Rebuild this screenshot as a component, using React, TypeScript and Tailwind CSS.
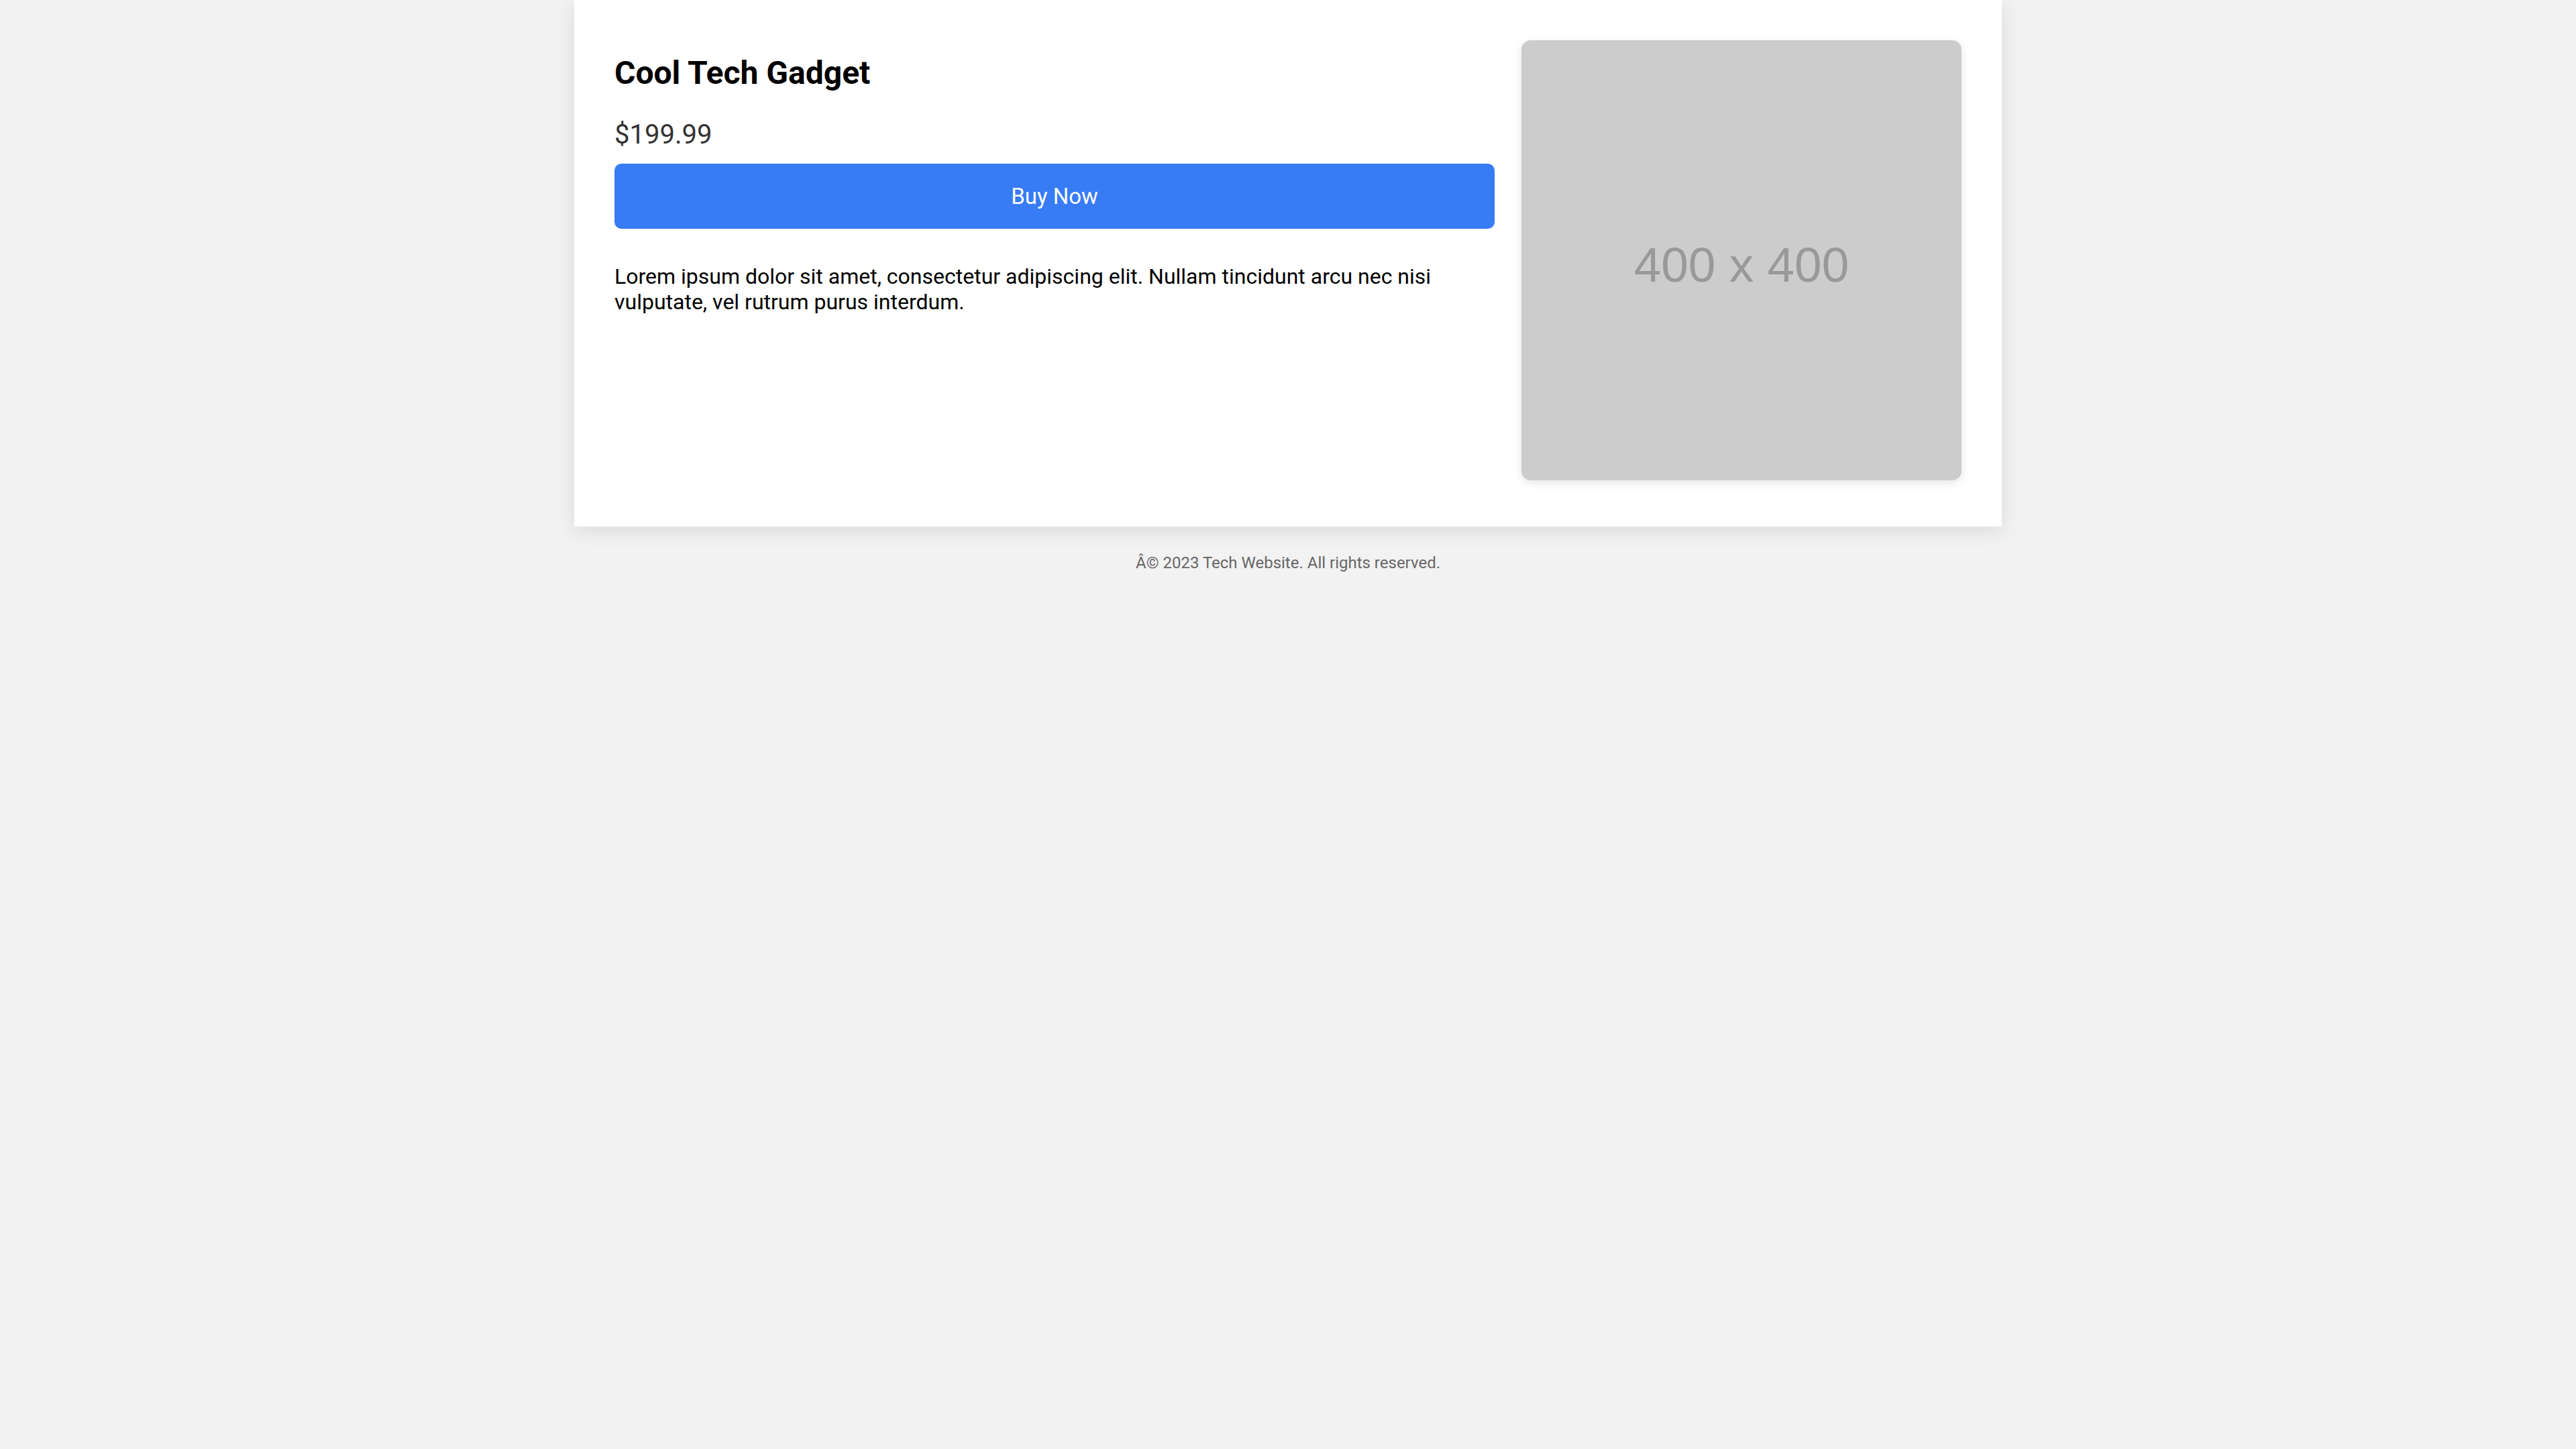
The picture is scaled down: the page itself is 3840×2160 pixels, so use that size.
export default function App() {
  return (
    <div className="min-h-screen bg-[#f2f2f2] font-['Roboto',sans-serif]">
      <div className="mx-auto flex w-[2128px] gap-[40px] bg-white px-[60px] pt-[60px] pb-[69px] shadow-[0_6px_28px_rgba(0,0,0,0.1)]">
        <div className="flex-[2]">
          <h1 className="mt-[21px] text-[48px] leading-[56px] font-bold text-black">Cool Tech Gadget</h1>
          <p className="mt-[40px] text-[40px] leading-[47px] text-[#333]">$199.99</p>
          <button className="mt-[20px] flex h-[97px] w-full items-center justify-center rounded-[10px] bg-[#377bf5] text-[33px] text-white">
            Buy Now
          </button>
          <p className="mt-[52px] text-[32px] leading-[38px] text-black">
            Lorem ipsum dolor sit amet, consectetur adipiscing elit. Nullam tincidunt arcu nec nisi vulputate, vel rutrum purus interdum.
          </p>
        </div>
        <div className="flex-1">
          <div className="flex aspect-square w-full items-center justify-center rounded-[14px] bg-[#cccccc] shadow-[0_4px_14px_rgba(0,0,0,0.1)]">
            <span className="mt-[14px] font-['Liberation_Sans',sans-serif] text-[73px] text-[#999]">400 x 400</span>
          </div>
        </div>
      </div>
      <footer className="pt-[40px] text-center text-[24px] leading-[28px] text-[#666]">
        Â© 2023 Tech Website. All rights reserved.
      </footer>
    </div>
  );
}
